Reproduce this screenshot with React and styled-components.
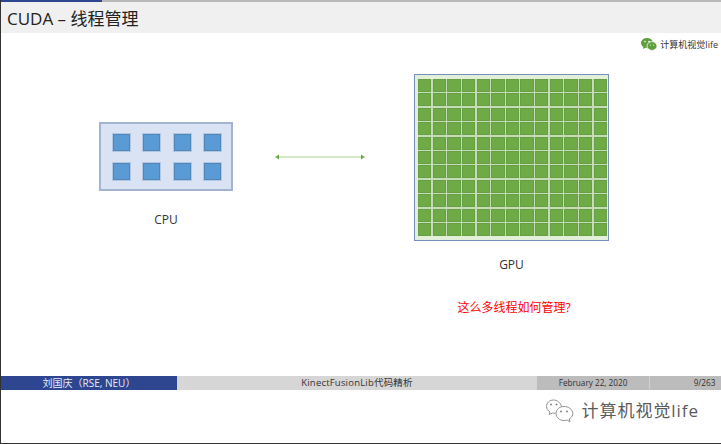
import styled, { createGlobalStyle } from "styled-components";

const FONT = `"Open Sans", "Noto Sans CJK SC", sans-serif`;

const Global = createGlobalStyle`
  html, body { margin: 0; padding: 0; background: #fff; }
  body { font-family: ${FONT}; overflow: hidden; }
`;

const Page = styled.div`
  width: 721px;
  height: 444px;
  box-sizing: border-box;
  display: flex;
  flex-direction: column;
  border-left: 1px solid #333;
  border-bottom: 1px solid #333;
`;

const TopStrip = styled.div`
  height: 2px;
  flex: none;
  background: linear-gradient(to right, #2e4690 101px, #b9b9b9 101px);
`;

const TitleBar = styled.div`
  height: 31px;
  flex: none;
  background: #f0f0f0;
  display: flex;
  align-items: center;
  padding-left: 6px;
  font-size: 17px;
  color: #222;
`;

const Slide = styled.div`
  flex: 1;
  min-height: 0;
  display: flex;
  flex-direction: column;
`;

const BadgeRow = styled.div`
  height: 20px;
  margin-top: 1px;
  display: flex;
  justify-content: flex-end;
  align-items: center;
  gap: 3px;
  padding-right: 3px;
  font-size: 9px;
  color: #333;
`;

const Diagram = styled.div`
  display: flex;
  align-items: flex-start;
  padding-left: 98px;
  margin-top: 20px;
`;

const Column = styled.div`
  display: flex;
  flex-direction: column;
  align-items: center;
  margin-top: ${(p) => p.$top || 0}px;
`;

const CpuBox = styled.div`
  width: 134px;
  height: 69px;
  box-sizing: border-box;
  background: #dae3f3;
  border: 2px solid #a3b3d2;
  display: grid;
  grid-template-columns: repeat(4, 17px);
  grid-template-rows: repeat(2, 17px);
  column-gap: 13.3px;
  row-gap: 12px;
  padding: 10px 0 0 12px;
`;

const CpuCell = styled.div`
  box-sizing: border-box;
  background: #5b9bd5;
  border: 1px solid #5087ba;
  box-shadow: 0 0 0 1px #b4c7e2;
`;

const GpuBox = styled.div`
  width: 195px;
  height: 167px;
  box-sizing: border-box;
  background: #e2f0d9;
  border: 1px solid #7590bd;
  padding: 4px 0 0 3px;
`;

const GpuGrid = styled.div`
  width: 189px;
  height: 157px;
  background: #c6dcb6;
  display: grid;
  grid-template-columns: repeat(13, 13.3px);
  grid-template-rows: repeat(11, 13px);
  column-gap: 1.35px;
  row-gap: 1.4px;
`;

const GpuCell = styled.div`
  box-sizing: border-box;
  background: #6eaa46;
  border: 1px solid #67a044;
`;

const Label = styled.div`
  font-size: 12px;
  line-height: 16px;
  color: #333;
  margin-top: ${(p) => p.$gap}px;
`;

const Question = styled.div`
  font-size: 12px;
  line-height: 16px;
  color: #f00;
  margin-top: 27px;
  padding-left: 5px;
`;

const ArrowSlot = styled.div`
  width: 92px;
  height: 8px;
  margin: 70px 48px 0 41px;
  flex: none;
`;

const Footer = styled.div`
  height: 14px;
  flex: none;
  display: flex;
  line-height: 14px;
  text-align: center;
`;

const FootCell = styled.div`
  width: ${(p) => p.$w}px;
  flex: ${(p) => (p.$w ? "none" : 1)};
  background: ${(p) => p.$bg};
  color: ${(p) => p.$color || "#333"};
  border-left: ${(p) => (p.$divider ? "1px solid #d0d0d0" : "none")};
  box-sizing: border-box;
  white-space: nowrap;
  font-size: ${(p) => p.$size || 8.2}px;
  letter-spacing: ${(p) => p.$spacing || 0}px;
  padding-left: ${(p) => p.$pl || 0}px;
`;

const Watermark = styled.div`
  height: 53px;
  box-sizing: border-box;
  flex: none;
  display: flex;
  justify-content: flex-end;
  align-items: flex-start;
  gap: 8px;
  padding: 9px 22px 0 0;
  font-size: 17px;
  line-height: 24px;
  color: #5a5a5a;
  letter-spacing: 0.95px;
`;

const WeChatSolid = () => (
  <svg width="16" height="13" viewBox="0 0 16 13">
    <ellipse cx="6" cy="5" rx="6" ry="5" fill="#5f9e3d" />
    <path d="M2.5 8.5 L2 11 L5 9.5 Z" fill="#5f9e3d" />
    <ellipse cx="11" cy="8" rx="5" ry="4.4" fill="#5f9e3d" stroke="#fff" strokeWidth="0.8" />
    <circle cx="4" cy="3.6" r="0.8" fill="#fff" />
    <circle cx="8" cy="3.6" r="0.8" fill="#fff" />
    <circle cx="9.4" cy="7" r="0.6" fill="#fff" />
    <circle cx="12.6" cy="7" r="0.6" fill="#fff" />
  </svg>
);

const WeChatOutline = () => (
  <svg width="28" height="24" viewBox="0 0 28 24" fill="none" stroke="#777" strokeWidth="0.8">
    <path d="M15.5 7.5 C14.5 3.5 11 1 7.5 1 C3.5 1 0.5 4 0.5 7.5 C0.5 10 2 12 4 13 L3.3 15.5 L6.3 14 C7.3 14.3 8.3 14.4 9.5 14.3" />
    <path d="M18 7.5 C13.5 7.5 10 10.5 10 14.5 C10 18.5 13.5 21.5 18 21.5 C19.2 21.5 20.2 21.3 21 21 L24 22.7 L23.3 19.8 C25.5 18.4 26.8 16.6 26.8 14.5 C26.8 10.5 22.5 7.5 18 7.5 Z" />
    <circle cx="5" cy="5.5" r="0.9" fill="#777" stroke="none" />
    <circle cx="10.5" cy="5.5" r="0.9" fill="#777" stroke="none" />
    <circle cx="15" cy="12.5" r="0.9" fill="#777" stroke="none" />
    <circle cx="21" cy="12.5" r="0.9" fill="#777" stroke="none" />
  </svg>
);

const Arrow = () => (
  <svg width="92" height="8" viewBox="0 0 92 8">
    <line x1="3" y1="4" x2="89" y2="4" stroke="#a9d18e" strokeWidth="1.2" />
    <path d="M1 4 L5 1.5 V6.5 Z M91 4 L87 1.5 V6.5 Z" fill="#70ad47" />
  </svg>
);

const App = () => (
  <Page>
    <Global />
    <TopStrip />
    <TitleBar>CUDA – 线程管理</TitleBar>
    <Slide>
      <BadgeRow>
        <WeChatSolid />
        <span>计算机视觉life</span>
      </BadgeRow>
      <Diagram>
        <Column $top={48}>
          <CpuBox>
            {Array.from({ length: 8 }, (_, i) => (
              <CpuCell key={i} />
            ))}
          </CpuBox>
          <Label $gap={21}>CPU</Label>
        </Column>
        <ArrowSlot>
          <Arrow />
        </ArrowSlot>
        <Column>
          <GpuBox>
            <GpuGrid>
              {Array.from({ length: 143 }, (_, i) => (
                <GpuCell key={i} />
              ))}
            </GpuGrid>
          </GpuBox>
          <Label $gap={16}>GPU</Label>
          <Question>这么多线程如何管理?</Question>
        </Column>
      </Diagram>
    </Slide>
    <Footer>
      <FootCell $w={176} $bg="#2e4690" $color="#e8ecf6" $size={10}>
        刘国庆（RSE, NEU）
      </FootCell>
      <FootCell $bg="#d6d6d6" $size={9.5} $spacing={0.2}>
        KinectFusionLib代码精析
      </FootCell>
      <FootCell $w={112} $bg="#bcbcbc">
        February 22, 2020
      </FootCell>
      <FootCell $w={72} $bg="#bcbcbc" $divider $pl={38}>
        9/263
      </FootCell>
    </Footer>
    <Watermark>
      <WeChatOutline />
      <span>计算机视觉life</span>
    </Watermark>
  </Page>
);

export default App;
